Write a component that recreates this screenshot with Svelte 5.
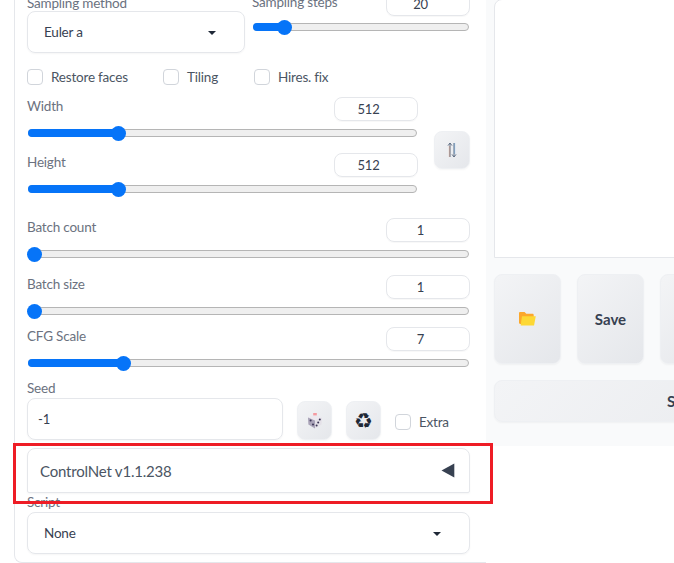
<script>
  const sliders = {
    steps: 14.8, width: 23.6, height: 23.6, count: 0, size: 0, cfg: 21.8
  };
</script>

<div class="page">
  <div class="root">
    <section class="panel">
      <div class="sampling">
        <div class="method">
          <div class="label">Sampling method</div>
          <div class="select"><span>Euler a</span><i class="caret"></i></div>
        </div>
        <div class="steps">
          <div class="head">
            <div class="label">Sampling steps</div>
            <div class="num">20</div>
          </div>
          <div class="slider"><div class="fill" style="width:{sliders.steps}%"><b></b></div></div>
        </div>
      </div>

      <div class="checks">
        <label class="check c1"><i class="box"></i>Restore faces</label>
        <label class="check c2"><i class="box"></i>Tiling</label>
        <label class="check"><i class="box"></i>Hires. fix</label>
      </div>

      <div class="dims">
        <div class="dimcol">
          <div class="head dhead">
            <div class="label">Width</div>
            <div class="num">512</div>
          </div>
          <div class="slider"><div class="fill" style="width:{sliders.width}%"><b></b></div></div>
          <div class="head dhead second">
            <div class="label">Height</div>
            <div class="num">512</div>
          </div>
          <div class="slider"><div class="fill" style="width:{sliders.height}%"><b></b></div></div>
        </div>
        <button class="btn swap" aria-label="swap">
          <svg width="12" height="18" viewBox="0 0 12 18" fill="none">
            <path d="M3.5 5v11" stroke="#f0c4b0" stroke-width="1.4"/>
            <path d="M8.5 2v11" stroke="#a9d0f2" stroke-width="1.4"/>
            <path d="M4 16V2M2 4.6 4 2l2 2.6" stroke="#55647c" stroke-width="0.9"/>
            <path d="M8 2v14M6 13.4 8 16l2-2.6" stroke="#55647c" stroke-width="0.9"/>
          </svg>
        </button>
      </div>

      <div class="group first">
        <div class="head">
          <div class="label">Batch count</div>
          <div class="num">1</div>
        </div>
        <div class="slider"><div class="fill zero" style="width:{sliders.count}%"><b></b></div></div>
      </div>
      <div class="group">
        <div class="head">
          <div class="label">Batch size</div>
          <div class="num">1</div>
        </div>
        <div class="slider"><div class="fill zero" style="width:{sliders.size}%"><b></b></div></div>
      </div>
      <div class="group">
        <div class="head">
          <div class="label">CFG Scale</div>
          <div class="num">7</div>
        </div>
        <div class="slider"><div class="fill" style="width:{sliders.cfg}%"><b></b></div></div>
      </div>

      <div class="label">Seed</div>
      <div class="seedrow">
        <div class="seed">-1</div>
        <button class="btn tool" aria-label="random">
          <svg width="16" height="16" viewBox="0 0 16 16">
            <path d="M8 1.5 15 4.4 8 7.4 1 4.4Z" fill="#ece9ef"/>
            <rect x="6.2" y="0" width="3.6" height="2.4" fill="#f59aa0"/>
            <path d="M8 7.4 15 4.4 14.6 11.6 8 15.6Z" fill="#e4e1e8"/>
            <path d="M8 7.4 1 4.4 1.4 11.6 8 15.6Z" fill="#a9a3b8"/>
            <g fill="#3a3454">
              <circle cx="3.6" cy="7.6" r="1"/><circle cx="6" cy="11.6" r="1"/>
              <circle cx="12.8" cy="6.6" r="1"/><circle cx="11.2" cy="9.6" r="1"/><circle cx="9.6" cy="12.6" r="1"/>
            </g>
          </svg>
        </button>
        <button class="btn tool recycle">♻</button>
        <label class="check extra"><i class="box"></i>Extra</label>
      </div>

      <div class="accordion">
        <span>ControlNet v1.1.238</span>
        <svg width="14" height="15" viewBox="0 0 14 15"><path d="M0.5 7.5 13.3 0.6V14.4Z" fill="#374151"/></svg>
      </div>

      <div class="label scriptlabel">Script</div>
      <div class="select script"><span>None</span><i class="caret"></i></div>
    </section>

    <section class="results">
      <div class="image"></div>
      <div class="actions">
        <button class="btn action" aria-label="open folder">
          <svg width="17" height="14" viewBox="0 0 17 14">
            <path d="M0 1.2C0 .5.5 0 1.2 0h4.4l1.7 1.7h6.2c.7 0 1.2.5 1.2 1.2V12H1.2C.5 12 0 11.5 0 10.8Z" fill="#fca82c"/>
            <path d="M3 4.2h13.8L15 13.4H1.6Z" fill="#fdd835"/>
          </svg>
        </button>
        <button class="btn action">Save</button>
        <button class="btn action">Zip</button>
      </div>
      <button class="btn wide">Send to img2img</button>
    </section>
  </div>

  <div class="highlight"></div>
</div>

<style>
  :global(body) {
    margin: 0;
    background: #fff;
  }
  .page {
    position: relative;
    width: 674px;
    height: 563px;
    overflow: hidden;
    font-family: Lato, "Noto Sans", sans-serif;
    font-size: 13.5px;
    letter-spacing: -0.2px;
    color: #374151;
  }
  .root {
    display: flex;
    align-items: flex-start;
    margin-top: -15px;
    padding-left: 14px;
    width: 1000px;
  }
  .panel {
    box-sizing: border-box;
    width: 472px;
    height: 578px;
    flex: none;
    padding: 9px 16px 0 12px;
    border-left: 1px solid #e5e7eb;
    border-bottom: 1px solid #e5e7eb;
    border-bottom-left-radius: 8px;
  }
  .label {
    color: #6b7280;
    line-height: 18px;
  }
  .sampling {
    display: flex;
    gap: 7px;
    height: 75px;
  }
  .method {
    width: 218px;
  }
  .steps {
    width: 218px;
    margin-top: -2px;
  }
  .select {
    box-sizing: border-box;
    height: 42px;
    margin-top: -1px;
    border: 1px solid #e5e7eb;
    border-radius: 8px;
    padding: 0 28px 0 16px;
    display: flex;
    align-items: center;
    justify-content: space-between;
    box-shadow: 0 1px 2px rgba(0, 0, 0, 0.04);
    color: #374151;
  }
  .caret {
    width: 0;
    height: 0;
    border-left: 4px solid transparent;
    border-right: 4px solid transparent;
    border-top: 4px solid #1f2937;
    margin-top: 2px;
  }
  .head {
    display: flex;
    justify-content: space-between;
    height: 24px;
  }
  .steps .label {
    margin-top: 1px;
  }
  .num {
    box-sizing: border-box;
    width: 84px;
    height: 24px;
    border: 1px solid #e5e7eb;
    border-radius: 8px;
    padding-right: 15px;
    text-align: center;
    line-height: 23px;
    font-size: 13px;
    color: #374151;
    box-shadow: 0 1px 1px rgba(0, 0, 0, 0.03);
  }
  .slider {
    box-sizing: border-box;
    margin: 8px 1px 0;
    height: 8px;
    border: 1px solid #b5b5b5;
    background: #efefef;
    border-radius: 4px;
    position: relative;
  }
  .fill {
    position: absolute;
    left: -1px;
    top: -1px;
    height: 8px;
    background: #0674f8;
    border-radius: 4px 0 0 4px;
  }
  .fill b {
    position: absolute;
    right: -7px;
    top: -3.5px;
    width: 15px;
    height: 15px;
    border-radius: 50%;
    background: #0674f8;
  }
  .fill.zero b {
    right: auto;
    left: -1px;
  }
  .steps .slider {
    margin-top: 7px;
  }
  .checks {
    display: flex;
    height: 16px;
  }
  .check {
    display: inline-flex;
    align-items: center;
    height: 16px;
    line-height: 16px;
    color: #4b5563;
  }
  .c1 {
    width: 136px;
  }
  .c2 {
    width: 91px;
  }
  .box {
    box-sizing: border-box;
    width: 16px;
    height: 16px;
    border: 1px solid #d1d5db;
    border-radius: 4px;
    margin-right: 8px;
    flex: none;
  }
  .dims {
    display: flex;
    gap: 16px;
    margin-top: 12px;
    height: 108px;
  }
  .dimcol {
    width: 391px;
    flex: none;
  }
  .dhead.second {
    margin-top: 16px;
  }
  .btn {
    box-sizing: border-box;
    border: 1px solid #eef0f3;
    border-radius: 8px;
    padding: 0;
    background: linear-gradient(135deg, #f3f4f6, #e5e7eb);
    display: flex;
    align-items: center;
    justify-content: center;
    font-family: inherit;
    color: #374151;
    box-shadow: 0 1px 2px rgba(0, 0, 0, 0.04);
  }
  .swap {
    width: 36px;
    height: 38px;
    margin-top: 34px;
  }
  .group {
    height: 52px;
  }
  .group.first {
    margin-top: 13px;
    height: 57px;
  }
  .seedrow {
    display: flex;
    align-items: flex-end;
    margin-top: 1px;
    height: 42px;
  }
  .seed {
    box-sizing: border-box;
    width: 256px;
    height: 42px;
    border: 1px solid #e5e7eb;
    border-radius: 8px;
    padding: 0 10px;
    line-height: 41px;
    font-size: 13px;
    margin-right: 14px;
    box-shadow: 0 1px 2px rgba(0, 0, 0, 0.04);
  }
  .tool {
    width: 35px;
    height: 39px;
    margin-right: 14px;
  }
  .recycle {
    font-family: "DejaVu Sans", sans-serif;
    font-size: 21px;
    color: #1f2937;
  }
  .extra {
    margin-bottom: 10px;
  }
  .accordion {
    box-sizing: border-box;
    height: 45px;
    margin-top: 8px;
    border: 1px solid #e5e7eb;
    border-radius: 8px 8px 2px 2px;
    padding: 0 14px 0 12px;
    display: flex;
    align-items: center;
    justify-content: space-between;
    font-size: 15px;
    color: #4b5563;
    box-shadow: 0 1px 2px rgba(0, 0, 0, 0.04);
  }
  .scriptlabel {
    margin-top: 0;
  }
  .script {
    margin-top: 1px;
  }
  .results {
    box-sizing: border-box;
    width: 500px;
    flex: none;
    height: 461px;
    background: #f9fafb;
    padding: 14px 8px 0 8px;
  }
  .image {
    height: 259px;
    background: #fff;
    border: 1px solid #e5e7eb;
    border-radius: 8px 0 0 0;
    box-sizing: border-box;
  }
  .actions {
    display: flex;
    gap: 16px;
    margin-top: 16px;
  }
  .action {
    width: 67px;
    height: 90px;
    font-size: 15px;
    font-weight: 700;
  }
  .wide {
    margin-top: 16px;
    width: 458px;
    height: 42px;
    font-size: 15px;
    font-weight: 700;
  }
  .highlight {
    position: absolute;
    left: 13px;
    top: 443px;
    width: 480px;
    height: 61px;
    box-sizing: border-box;
    border: 3px solid #ee1c25;
    pointer-events: none;
  }
</style>
